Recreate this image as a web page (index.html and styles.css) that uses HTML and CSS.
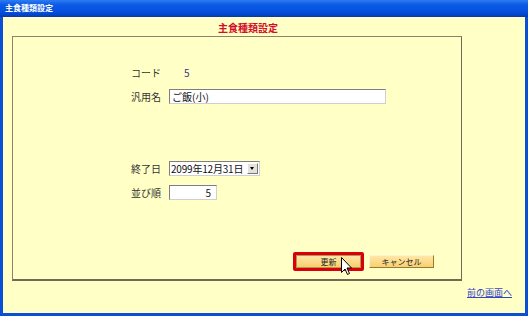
FILE: index.html
```html
<!DOCTYPE html>
<html lang="ja">
<head>
  <meta charset="UTF-8">
  <title>主食種類設定</title>
  <link rel="stylesheet" href="styles.css">
</head>
<body>

  <div class="window">
    <div class="titlebar">主食種類設定</div>

    <div class="content">
      <h1 class="heading">主食種類設定</h1>

      <div class="panel">
        <div class="form">
          <div class="label">コード</div>
          <div class="field"><span class="code-value">5</span></div>

          <div class="label">汎用名</div>
          <div class="field"><div class="textbox wide">ご飯(小)</div></div>

          <div class="spacer"></div>
          <div class="spacer"></div>
          <div class="spacer"></div>
          <div class="spacer"></div>

          <div class="label">終了日</div>
          <div class="field">
            <div class="select">
              <span class="select-text">2099年12月31日</span>
              <span class="select-arrow"></span>
            </div>
          </div>

          <div class="label">並び順</div>
          <div class="field"><div class="textbox short">5</div></div>
        </div>

        <div class="buttons">
          <div class="focus-ring">
            <div class="button">更新</div>
            <svg class="cursor" width="12" height="19" viewBox="0 0 12 19">
              <path d="M0.5 0.5 L0.5 15.5 L4 12 L6.5 17.5 L8.5 16.5 L6 11 L10.5 11 Z" fill="#fff" stroke="#000" stroke-width="1"/>
            </svg>
          </div>
          <div class="button">キャンセル</div>
        </div>
      </div>

      <div class="footer">
        <a class="back-link" href="#">前の画面へ</a>
      </div>
    </div>
  </div>

</body>
</html>
```

FILE: styles.css
```css
body {
  margin: 0;
  font-family: "Noto Sans CJK JP", "Noto Sans", sans-serif;
  font-size: 10px;
  color: #222;
}

.window {
  width: 528px;
  height: 316px;
  box-sizing: border-box;
  background-color: #0a4fd8;
  padding: 0 3px 3px 3px;
  display: flex;
  flex-direction: column;
}

.titlebar {
  height: 16px;
  line-height: 16px;
  margin: 0 -3px;
  padding-left: 5px;
  color: white;
  font-weight: bold;
  font-size: 8px;
  background: linear-gradient(to bottom, #2d7cf0 0%, #0c5ae6 30%, #0552e0 70%, #0340c0 100%);
  border-bottom: 1px solid #0a3aa8;
}

.content {
  flex: 1;
  background-color: #ffffc6;
  display: flex;
  flex-direction: column;
  padding: 0 9px 0 9px;
}

.heading {
  margin: 0;
  height: 19px;
  line-height: 21px;
  text-align: center;
  padding-right: 32px;
  font-size: 10px;
  font-weight: bold;
  color: #d0102a;
}

.panel {
  height: 245px;
  width: 450px;
  box-sizing: border-box;
  border-top: 1px solid #8a8468;
  border-left: 1px solid #8a8468;
  border-right: 1px solid #6f6b55;
  border-bottom: 2px solid #6f6b55;
  display: flex;
  flex-direction: column;
  justify-content: space-between;
  padding: 23px 0 8px 0;
}

.form {
  display: grid;
  grid-template-columns: 148px 1fr;
  grid-auto-rows: 24px;
  column-gap: 8px;
  align-items: center;
}

.label {
  text-align: right;
  white-space: nowrap;
  color: #333;
}

.spacer {
  height: 24px;
}

.code-value {
  margin-left: 15px;
  color: #33338a;
}

.textbox {
  height: 13px;
  line-height: 13px;
  box-sizing: content-box;
  background-color: white;
  border-top: 1px solid #7f7f7f;
  border-left: 1px solid #7f7f7f;
  border-right: 1px solid #cfcfcf;
  border-bottom: 1px solid #cfcfcf;
  padding: 0 2px;
  white-space: nowrap;
  color: #111;
}

.textbox.wide {
  width: 211px;
}

.textbox.short {
  width: 39px;
  text-align: right;
  padding-right: 5px;
}

.select {
  width: 89px;
  height: 13px;
  background-color: white;
  border-top: 1px solid #7f7f7f;
  border-left: 1px solid #7f7f7f;
  border-right: 1px solid #cfcfcf;
  border-bottom: 1px solid #cfcfcf;
  display: flex;
  align-items: center;
  justify-content: space-between;
}

.select-text {
  padding-left: 1px;
  line-height: 13px;
  white-space: nowrap;
  letter-spacing: -0.2px;
  color: #111;
}

.select-arrow {
  width: 11px;
  height: 11px;
  margin-right: 1px;
  box-sizing: border-box;
  background-color: #e4e2da;
  border-top: 1px solid #fff;
  border-left: 1px solid #fff;
  border-right: 1px solid #777;
  border-bottom: 1px solid #777;
  position: relative;
}

.select-arrow::after {
  content: "";
  position: absolute;
  left: 2px;
  top: 3px;
  border-left: 2.5px solid transparent;
  border-right: 2.5px solid transparent;
  border-top: 3px solid #000;
}

.buttons {
  display: flex;
  gap: 5px;
  align-items: center;
  padding-left: 280px;
}

.focus-ring {
  position: relative;
  border: 3px solid #d80010;
  border-radius: 2px;
}

.button {
  width: 63px;
  height: 11px;
  line-height: 11px;
  text-align: center;
  font-size: 8px;
  color: #222;
  background: linear-gradient(to bottom, #ffe7a8, #f8cf6e);
  border-top: 1px solid #fff3cc;
  border-left: 1px solid #fff3cc;
  border-right: 1px solid #9a7a30;
  border-bottom: 1px solid #9a7a30;
}

.focus-ring .button {
  border-color: #b89848;
}

.cursor {
  position: absolute;
  left: 45px;
  top: 2px;
}

.footer {
  flex: 1;
  display: flex;
  justify-content: flex-end;
  align-items: flex-start;
  padding-top: 5px;
  padding-right: 4px;
}

.back-link {
  color: #3344cc;
  text-decoration: underline;
  font-size: 9px;
}
```
